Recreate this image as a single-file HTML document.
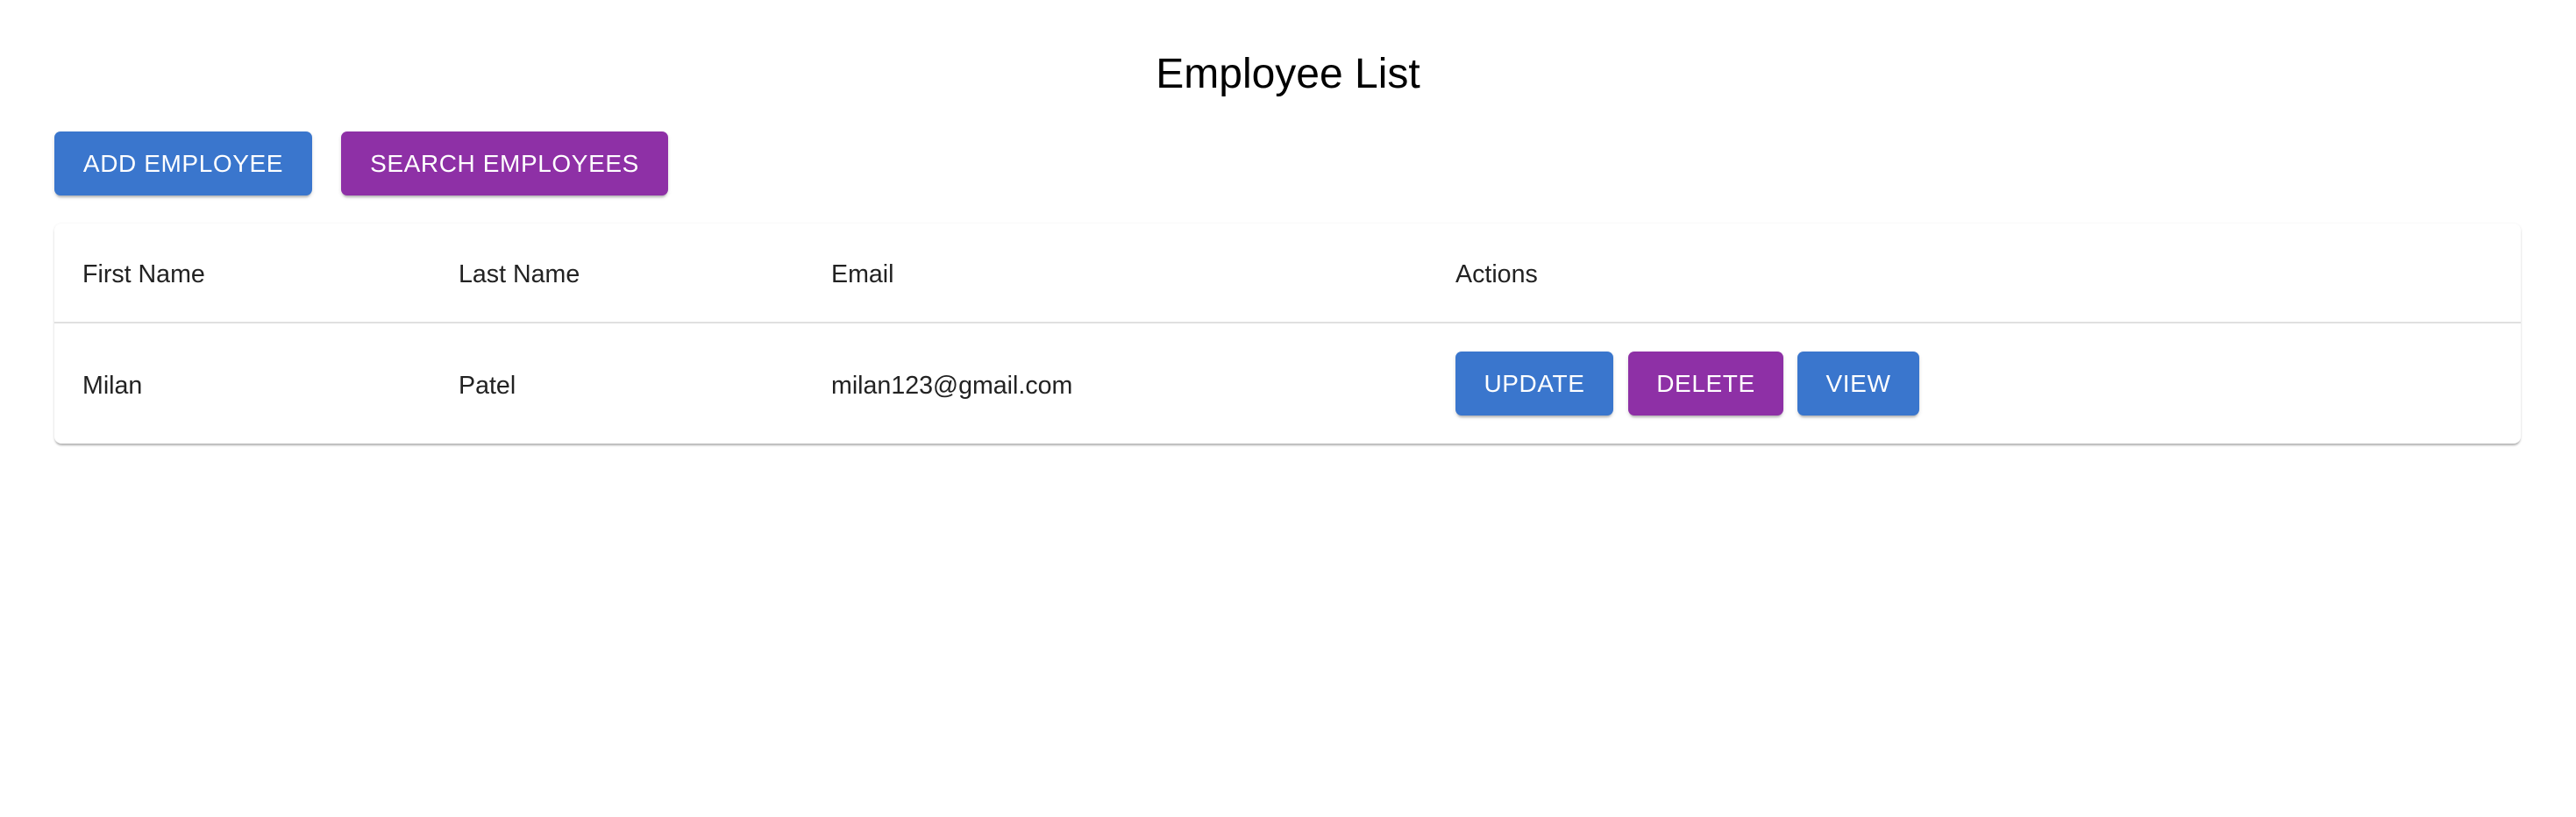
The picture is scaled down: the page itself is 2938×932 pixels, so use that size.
<!DOCTYPE html>
<html><head><meta charset="utf-8"><style>
body{margin:0;width:2938px;height:932px;background:#fff;font-family:"Liberation Sans",sans-serif;position:relative;overflow:hidden}
.t{position:absolute;left:0;width:2938px;text-align:center;top:57px;font-size:48px;color:#000}
.b{position:absolute;color:#fff;font-size:28px;letter-spacing:0.6px;display:flex;align-items:center;justify-content:center;border-radius:7px;box-shadow:0 4px 2px -2px rgba(0,0,0,.2),0 2px 4px rgba(0,0,0,.14)}
.bl{background:#3a76cd}.pu{background:#8e30a6}
.card{position:absolute;left:62px;top:255px;width:2813px;height:251px;border-radius:8px;box-shadow:0 3px 2px -1px rgba(0,0,0,.25),0 1px 3px rgba(0,0,0,.12)}
.line{position:absolute;left:62px;width:2813px;top:367px;height:2px;background:#e0e0e0}
.x{position:absolute;font-size:28.6px;color:#222;line-height:30px}
</style></head><body>
<div class="t">Employee List</div>
<div class="b bl" style="left:62px;top:150px;width:294px;height:73px">ADD EMPLOYEE</div>
<div class="b pu" style="left:389px;top:150px;width:373px;height:73px">SEARCH EMPLOYEES</div>
<div class="card"></div>
<div class="line"></div>
<div class="x" style="left:94px;top:298px">First Name</div>
<div class="x" style="left:523px;top:298px">Last Name</div>
<div class="x" style="left:948px;top:298px">Email</div>
<div class="x" style="left:1660px;top:298px">Actions</div>
<div class="x" style="left:94px;top:425px">Milan</div>
<div class="x" style="left:523px;top:425px">Patel</div>
<div class="x" style="left:948px;top:425px">milan123@gmail.com</div>
<div class="b bl" style="left:1660px;top:401px;width:180px;height:73px">UPDATE</div>
<div class="b pu" style="left:1857px;top:401px;width:177px;height:73px">DELETE</div>
<div class="b bl" style="left:2050px;top:401px;width:139px;height:73px">VIEW</div>
</body></html>
